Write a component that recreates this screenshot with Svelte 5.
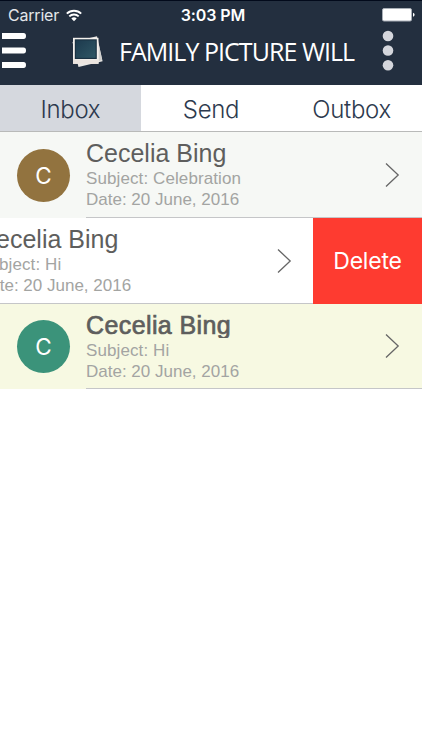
<script lang="ts">
  let active = $state("Inbox");
  const tabs = ["Inbox", "Send", "Outbox"];

  let messages = $state([
    { id: 1, name: "Cecelia Bing", subject: "Celebration", date: "20 June, 2016", kind: "read", open: false },
    { id: 2, name: "Cecelia Bing", subject: "Hi", date: "20 June, 2016", kind: "plain", open: true },
    { id: 3, name: "Cecelia Bing", subject: "Hi", date: "20 June, 2016", kind: "unread", open: false },
  ]);

  function remove(id: number) {
    messages = messages.filter((m) => m.id !== id);
  }
</script>

<div class="screen">
  <header>
    <div class="status">
      <div class="carrier">
        <span>Carrier</span>
        <svg width="16" height="13" viewBox="0 0 16 13" fill="none" stroke="#fff" stroke-width="1.9">
          <path d="M0.8 4.7a10.2 10.2 0 0 1 14.4 0" />
          <path d="M3.3 7.4a6.7 6.7 0 0 1 9.4 0" />
          <path d="M5.3 9.5a3.8 3.8 0 0 1 5.4 0L8 12.3z" fill="#fff" stroke="none" />
        </svg>
      </div>
      <span class="time">3:03 PM</span>
      <svg class="battery" width="33" height="14" viewBox="0 0 33 14">
        <rect x="0.5" y="0.5" width="29" height="12.5" rx="1.5" fill="#fff" stroke="#a9afb7" />
        <path d="M31 4.7q1.6 0.6 1.6 2t-1.6 2z" fill="#fff" />
      </svg>
    </div>
    <div class="bar">
      <button class="menu" aria-label="Menu">
        <svg width="24" height="36" viewBox="0 0 24 36" fill="#fff">
          <path d="M0 0h21.5q2.5 0 2.5 3t-2.5 3H0z" />
          <path d="M0 14.5h21.5q2.5 0 2.5 3t-2.5 3H0z" />
          <path d="M0 29h21.5q2.5 0 2.5 3t-2.5 3H0z" />
        </svg>
      </button>
      <svg class="logo" width="32" height="34" viewBox="0 0 32 34">
        <defs>
          <linearGradient id="photo" x1="0" y1="0" x2="1" y2="1">
            <stop offset="0" stop-color="#1d3a4e" />
            <stop offset="1" stop-color="#2f5765" />
          </linearGradient>
        </defs>
        <path d="M0.5 7L25 1.2l5.6 25L6.5 32z" fill="#e9e7e4" />
        <path d="M26.5 8l3.6 17-3.6 1z" fill="#cfcfcd" />
        <path d="M1 2.8h25.5v26H1z" fill="#f4f1ed" />
        <path d="M1 24.5h25.5v4.3H1z" fill="#ebe4df" />
        <path d="M2.8 4.3h22v19.7h-22z" fill="#1a3243" />
        <path d="M4 5.5h19.6v17.3H4z" fill="url(#photo)" />
      </svg>
      <h1>FAMILY PICTURE WILL</h1>
      <button class="more" aria-label="More">
        <svg width="12" height="42" viewBox="0 0 12 42" fill="#d4d6dc">
          <circle cx="6" cy="6" r="5.3" />
          <circle cx="6" cy="20.5" r="5.3" />
          <circle cx="6" cy="35.2" r="5.3" />
        </svg>
      </button>
    </div>
  </header>

  <nav>
    {#each tabs as tab}
      <button class:active={active === tab} onclick={() => (active = tab)}>{tab}</button>
    {/each}
  </nav>

  <main>
    {#each messages as m (m.id)}
      <div class="row {m.kind}" class:open={m.open}>
        <div class="avatar">{m.name[0]}</div>
        <div class="content">
          <div class="text">
            <div class="name">{m.name}</div>
            <div class="line subject">Subject: {m.subject}</div>
            <div class="line">Date: {m.date}</div>
          </div>
          <svg class="chevron" width="15" height="26" viewBox="0 0 15 26" fill="none" stroke="#666" stroke-width="1.3">
            <path d="M1 1.5L13.2 13 1 24.5" />
          </svg>
        </div>
        {#if m.open}
          <button class="delete" onclick={() => remove(m.id)}>Delete</button>
        {/if}
      </div>
    {/each}
  </main>
</div>

<style>
  :global(body) {
    margin: 0;
    background: #fff;
  }

  .screen {
    width: 422px;
    height: 750px;
    overflow: hidden;
    background: #fff;
    font-family: "Liberation Sans", Arial, sans-serif;
  }

  button {
    border: none;
    background: none;
    padding: 0;
    margin: 0;
    font-family: inherit;
    cursor: pointer;
  }

  svg {
    display: block;
  }

  header {
    box-sizing: border-box;
    height: 85px;
    background: #232f3f;
    border-top: 1px solid #020a1b;
    color: #fff;
  }

  .status {
    display: grid;
    grid-template-columns: 1fr auto 1fr;
    align-items: center;
    height: 28px;
    padding: 0 7px 0 8px;
    font-family: Inter, sans-serif;
    font-size: 16px;
    line-height: 28px;
  }

  .carrier {
    display: flex;
    align-items: center;
    gap: 7px;
    color: #e4e7eb;
    letter-spacing: -0.2px;
  }

  .time {
    padding-left: 3px;
    font-weight: 600;
    letter-spacing: -0.1px;
  }

  .battery {
    justify-self: end;
  }

  .bar {
    display: flex;
    align-items: center;
    height: 44px;
  }

  .menu {
    margin-left: 2px;
  }

  .logo {
    margin: 2px 0 0 46px;
  }

  h1 {
    flex: 1;
    margin: 0 0 0 15px;
    font-family: "Open Sans", sans-serif;
    font-size: 25px;
    font-weight: 400;
    letter-spacing: -0.96px;
    line-height: 44px;
    white-space: nowrap;
  }

  .more {
    margin-right: 28px;
  }

  nav {
    box-sizing: border-box;
    display: grid;
    grid-template-columns: repeat(3, 1fr);
    height: 47px;
    border-bottom: 1px solid #b9bab9;
  }

  nav button {
    padding-top: 2px;
    font-family: Inter, sans-serif;
    font-size: 24px;
    font-weight: 300;
    letter-spacing: -0.3px;
    color: #2d3a4e;
  }

  nav button.active {
    background: #d5d8de;
  }

  .row {
    display: flex;
    align-items: center;
    width: 422px;
    height: 86px;
    background: #fff;
  }

  .row.read {
    background: #f6f8f5;
  }

  .row.unread {
    height: 85px;
    background: #f7f9e2;
  }

  .row.open {
    width: 530px;
    margin-left: -108px;
  }

  .avatar {
    flex: none;
    width: 53px;
    height: 53px;
    margin: 0 16px 0 17px;
    border-radius: 50%;
    background: #92733f;
    color: #fff;
    font-family: Inter, sans-serif;
    font-size: 22.5px;
    line-height: 53px;
    text-align: center;
  }

  .unread .avatar {
    background: #3b937a;
  }

  .content {
    box-sizing: border-box;
    display: flex;
    flex: 1;
    justify-content: space-between;
    height: 100%;
    padding-right: 22px;
    border-bottom: 1px solid #c5c6c8;
  }

  .open .content {
    padding-right: 21px;
  }

  .text {
    padding-top: 7px;
    white-space: nowrap;
  }

  .name {
    height: 29px;
    font-size: 25px;
    line-height: 29px;
    color: #5e5e5d;
  }

  /* the heavier name loses the tip of its descender */
  .unread .name {
    clip-path: inset(0 -2px 2px -2px);
    letter-spacing: 0.4px;
    -webkit-text-stroke: 0.7px #5e5e5d;
  }

  .line {
    font-size: 17px;
    line-height: 21px;
    color: #a3a4a2;
  }

  .subject {
    letter-spacing: 0.1px;
  }

  .chevron {
    align-self: center;
  }

  .delete {
    flex: none;
    width: 109px;
    height: 86px;
    background: #fe3b30;
    color: #fff;
    font-family: Inter, sans-serif;
    font-size: 23px;
    letter-spacing: -0.2px;
  }
</style>
